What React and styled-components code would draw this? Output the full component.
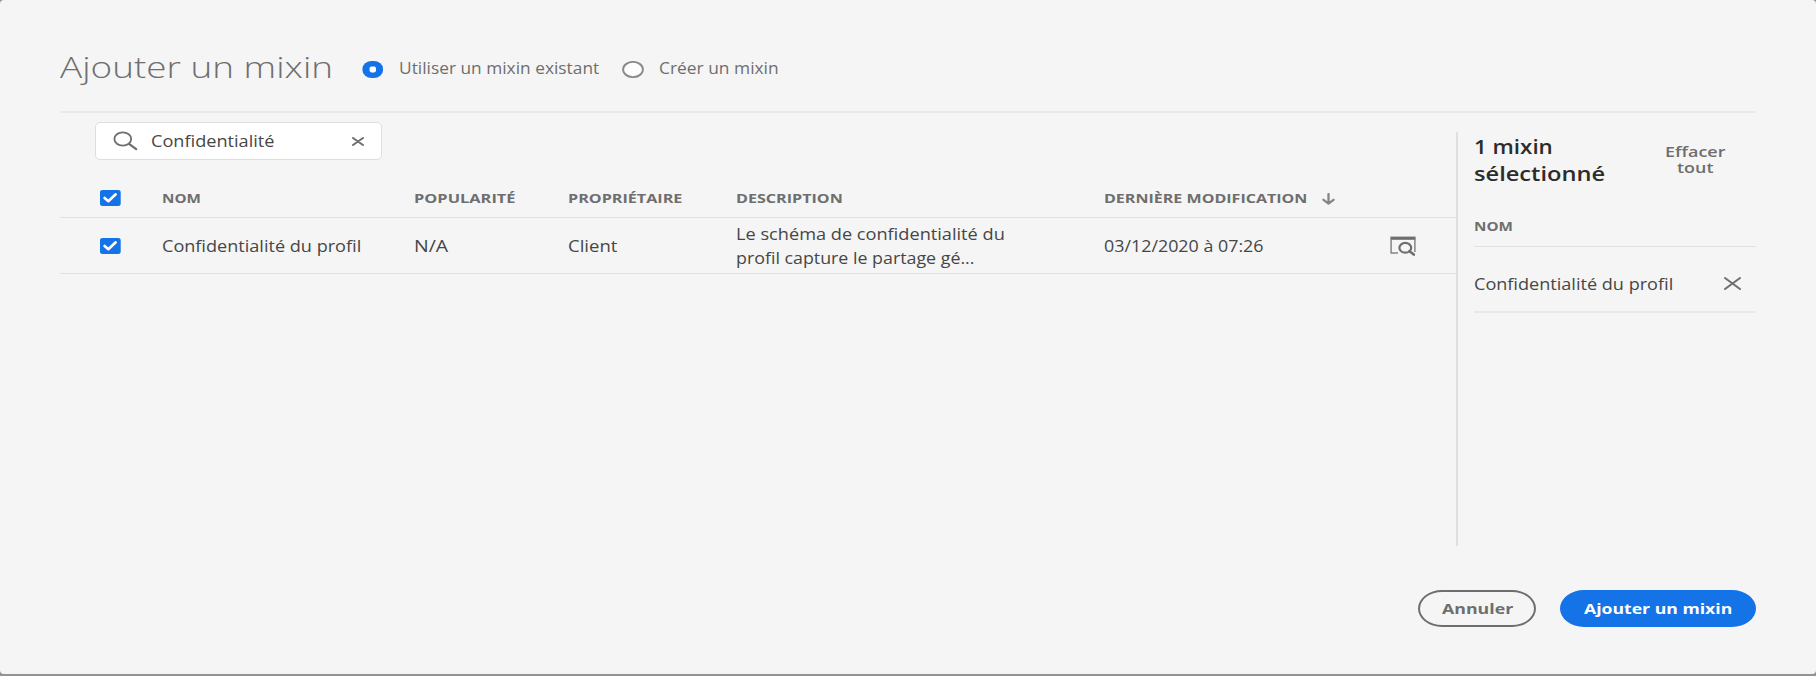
import React, { useLayoutEffect, useRef, useState } from "react";
import styled, { createGlobalStyle } from "styled-components";

const GlobalStyle = createGlobalStyle`
  * { box-sizing: border-box; }
  body {
    margin: 0;
    background: #929292;
    font-family: "Open Sans", "Noto Sans", sans-serif;
    color: #464646;
  }
  h1, h2, p { margin: 0; }
`;

const TextBox = styled.span`
  display: block;
  flex: none;
  width: ${(p) => p.$width}px;
  text-align: left;
  white-space: nowrap;
`;

const TextInner = styled.span`
  display: inline-block;
  vertical-align: top;
  transform-origin: 0 50%;
`;

/* One line of wide-set text: the glyphs are stretched to fill the given width. */
function WideText({ width, children }) {
  const ref = useRef(null);
  const [scale, setScale] = useState(1);
  useLayoutEffect(() => {
    const fit = () => ref.current && setScale(width / ref.current.offsetWidth);
    fit();
    document.fonts.ready.then(fit);
  }, [width]);
  return (
    <TextBox $width={width}>
      <TextInner ref={ref} style={{ transform: `scaleX(${scale})` }}>{children}</TextInner>
    </TextBox>
  );
}

const Dialog = styled.div`
  display: flex;
  flex-direction: column;
  width: 1816px;
  height: 674px;
  padding: 0 60px;
  background: #f5f5f5;
  border-radius: 4px;
`;

const Header = styled.header`
  display: flex;
  align-items: center;
  height: 113px;
  padding-top: 28px;
  border-bottom: 2px solid #e9e9e9;
`;

const Title = styled.h1`
  width: 302px;
  margin-bottom: 6px;
  font-size: 30px;
  line-height: 40px;
  font-weight: 350;
  color: #6e6e6e;
`;

const RadioOption = styled.label`
  display: flex;
  align-items: center;
  gap: 15px;
  margin-right: 23px;
  font-size: 15.5px;
  line-height: 20px;
  color: #6e6e6e;
`;

const RadioLabel = styled.span`
  margin-bottom: 3px;
`;

const Body = styled.main`
  display: flex;
  height: 433px;
`;

const Results = styled.section`
  width: 1396px;
`;

const SearchField = styled.div`
  display: flex;
  align-items: center;
  width: 287px;
  height: 38px;
  margin: 9px 0 0 35px;
  padding: 0 17px;
  background: #fff;
  border: 1px solid #dedede;
  border-radius: 5px;
  font-size: 15.5px;
  font-weight: 500;
  line-height: 20px;
`;

const SearchValue = styled.div`
  flex: 1;
  margin-left: 13px;
`;

const TableRow = styled.div`
  display: grid;
  grid-template-columns: 102px 252px 154px 168px 368px 286px 1fr;
  align-items: center;
  height: 56px;
  padding-top: 1px;
  border-bottom: 1px solid #e1e1e1;
  font-size: 15.5px;
  font-weight: 500;
  line-height: 24.5px;
`;

const headingText = `
  font-size: 12.5px;
  line-height: 18px;
  font-weight: 700;
  color: #6e6e6e;
`;

const TableHead = styled(TableRow)`
  height: 58px;
  padding-top: 20px;
  ${headingText}
`;

const CheckCell = styled.div`
  display: flex;
  padding: 0 0 1px 40px;
`;

const SortCell = styled.div`
  display: flex;
  align-items: center;
  gap: 14px;
`;

const Selection = styled.aside`
  flex: 1;
  height: 414px;
  margin-top: 19px;
  padding-left: 16px;
  border-left: 2px solid #dfdfdf;
`;

const SelectionHead = styled.div`
  display: flex;
  justify-content: space-between;
  height: 76px;
  padding-right: 30px;
`;

const SelectionTitle = styled.h2`
  margin-top: 1px;
  font-size: 19.5px;
  line-height: 27px;
  font-weight: 640;
  color: #2c2c2c;
`;

const ClearAll = styled.button`
  display: flex;
  flex-direction: column;
  align-items: center;
  align-self: flex-start;
  margin: 11px 0 0;
  padding: 0;
  border: 0;
  background: none;
  font: 650 15px/16px "Open Sans", "Noto Sans", sans-serif;
  color: #6e6e6e;
`;

const SelectionColumn = styled.div`
  height: 39px;
  padding-top: 10px;
  border-bottom: 1px solid #e1e1e1;
  ${headingText}
`;

const SelectionItem = styled.div`
  display: flex;
  align-items: center;
  justify-content: space-between;
  height: 66px;
  padding: 10px 15px 1px 0;
  border-bottom: 2px solid #e9e9e9;
  font-size: 15.5px;
  font-weight: 500;
  line-height: 24px;
`;

const Footer = styled.footer`
  display: flex;
  justify-content: flex-end;
  gap: 24px;
  margin-top: 44px;
`;

const Button = styled.button`
  display: flex;
  align-items: center;
  justify-content: center;
  width: ${(p) => p.$width}px;
  height: 37px;
  padding: 0 0 1px;
  border: 2px solid ${(p) => (p.$primary ? "#1473e6" : "#6e6e6e")};
  border-radius: 24px / 18.5px;
  background: ${(p) => (p.$primary ? "#1473e6" : "transparent")};
  color: ${(p) => (p.$primary ? "#fff" : "#6e6e6e")};
  font: 700 15px/20px "Open Sans", "Noto Sans", sans-serif;
`;

const Svg = styled.svg`
  display: block;
  flex: none;
`;

const Radio = ({ checked }) => (
  <Svg width="22" height="17" viewBox="0 0 22 17">
    {checked ? (
      <>
        <rect x="0.5" y="0" width="20.5" height="17" rx="9.2" ry="7.6" fill="#1473e6" />
        <rect x="7.6" y="5.4" width="6.4" height="6" rx="1.8" fill="#fff" />
      </>
    ) : (
      <ellipse cx="11" cy="8.5" rx="9.9" ry="7.6" fill="#fdfdfd" stroke="#8a8a8a" strokeWidth="1.9" />
    )}
  </Svg>
);

const Checkbox = () => (
  <Svg width="21" height="16" viewBox="0 0 21 16">
    <rect width="20.7" height="16" rx="2.4" ry="2" fill="#1473e6" />
    <path d="M4.6 7.9 8.4 11.2 15.7 4.3" fill="none" stroke="#fff" strokeWidth="2.6" strokeLinecap="round" strokeLinejoin="round" />
  </Svg>
);

const SearchIcon = () => (
  <Svg width="25" height="20" viewBox="0 0 25 20" fill="none" stroke="#6e6e6e" strokeWidth="1.8">
    <ellipse cx="9.8" cy="8" rx="8.4" ry="6.7" />
    <path d="M16 12.8 23.2 18.2" strokeWidth="2.2" strokeLinecap="round" />
  </Svg>
);

const Cross = ({ width, height, weight = 1.8 }) => (
  <Svg width={width} height={height} viewBox={`0 0 ${width} ${height}`}>
    <path
      d={`M1 1 ${width - 1} ${height - 1}M${width - 1} 1 1 ${height - 1}`}
      stroke="#6e6e6e"
      strokeWidth={weight}
      strokeLinecap="round"
    />
  </Svg>
);

const SortArrow = () => (
  <Svg width="14" height="12" viewBox="0 0 14 12" fill="none" stroke="#858585" strokeWidth="2.3" strokeLinecap="round" strokeLinejoin="round">
    <path d="M6.5 1v9.5M1.5 6.8 6.5 10.6 11.5 6.8" />
  </Svg>
);

const PreviewIcon = () => (
  <Svg width="26" height="20" viewBox="0 0 26 20" fill="none" stroke="#6e6e6e">
    <path d="M.4 .6H25.6V3.8H.4Z" fill="#6e6e6e" stroke="none" />
    <path d="M1.1 3V17H8M24.9 3V16" strokeWidth="1.5" stroke="#858585" />
    <ellipse cx="15.3" cy="11.8" rx="5.9" ry="4.9" strokeWidth="2.2" />
    <path d="M19.5 15.2 23.8 18.6" strokeWidth="2.6" strokeLinecap="round" />
  </Svg>
);

export default function App() {
  return (
    <>
      <GlobalStyle />
      <Dialog>
        <Header>
          <Title><WideText width={273}>Ajouter un mixin</WideText></Title>
          <RadioOption>
            <Radio checked />
            <RadioLabel><WideText width={200}>Utiliser un mixin existant</WideText></RadioLabel>
          </RadioOption>
          <RadioOption>
            <Radio />
            <RadioLabel><WideText width={120}>Créer un mixin</WideText></RadioLabel>
          </RadioOption>
        </Header>

        <Body>
          <Results>
            <SearchField>
              <SearchIcon />
              <SearchValue><WideText width={124}>Confidentialité</WideText></SearchValue>
              <Cross width={12} height={9} weight={2} />
            </SearchField>

            <TableHead>
              <CheckCell><Checkbox /></CheckCell>
              <WideText width={39}>NOM</WideText>
              <WideText width={101}>POPULARITÉ</WideText>
              <WideText width={115}>PROPRIÉTAIRE</WideText>
              <WideText width={107}>DESCRIPTION</WideText>
              <SortCell>
                <WideText width={204}>DERNIÈRE MODIFICATION</WideText>
                <SortArrow />
              </SortCell>
            </TableHead>
            <TableRow>
              <CheckCell><Checkbox /></CheckCell>
              <WideText width={199.5}>Confidentialité du profil</WideText>
              <WideText width={34}>N/A</WideText>
              <WideText width={49}>Client</WideText>
              <div>
                <WideText width={268.5}>Le schéma de confidentialité du</WideText>
                <WideText width={239}>profil capture le partage gé...</WideText>
              </div>
              <WideText width={159}>03/12/2020 à 07:26</WideText>
              <PreviewIcon />
            </TableRow>
          </Results>

          <Selection>
            <SelectionHead>
              <SelectionTitle>
                <WideText width={79}>1 mixin</WideText>
                <WideText width={131}>sélectionné</WideText>
              </SelectionTitle>
              <ClearAll>
                <WideText width={61}>Effacer</WideText>
                <WideText width={37}>tout</WideText>
              </ClearAll>
            </SelectionHead>
            <SelectionColumn><WideText width={39}>NOM</WideText></SelectionColumn>
            <SelectionItem>
              <WideText width={199.5}>Confidentialité du profil</WideText>
              <Cross width={17} height={13} weight={2} />
            </SelectionItem>
          </Selection>
        </Body>

        <Footer>
          <Button $width={118}><WideText width={71}>Annuler</WideText></Button>
          <Button $width={196} $primary><WideText width={148}>Ajouter un mixin</WideText></Button>
        </Footer>
      </Dialog>
    </>
  );
}
